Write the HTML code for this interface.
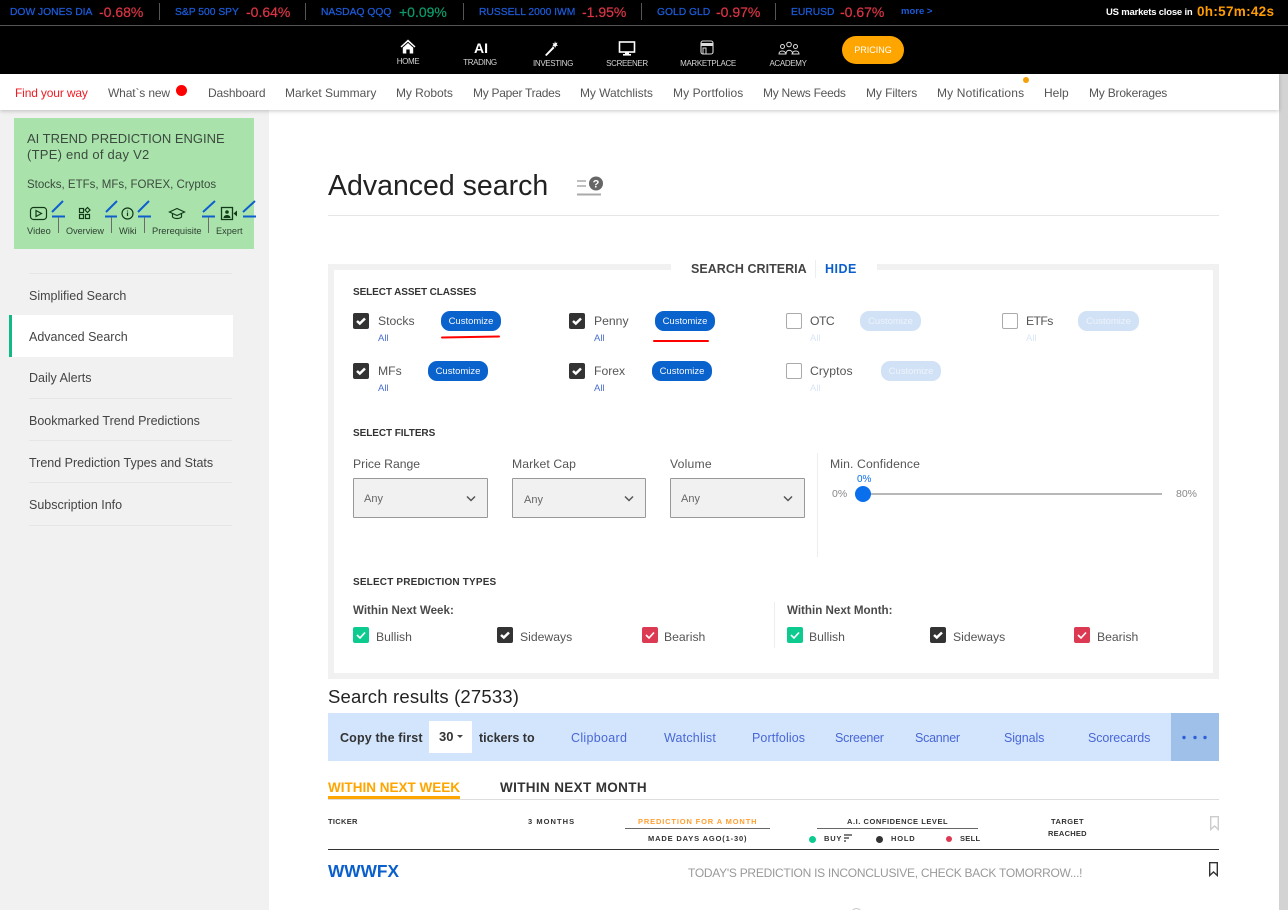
<!DOCTYPE html>
<html lang="en"><head><meta charset="utf-8"><title>Advanced search</title>
<style>
html,body{margin:0;padding:0;width:1288px;height:910px;overflow:hidden;background:#fff}
body{position:relative;font-family:"Liberation Sans",sans-serif;color:#333}
.a,.t{position:absolute}
.t{white-space:nowrap;line-height:16px;height:16px;margin-top:-8px}
.k{font-size:10.3px;color:#1c5bd8;-webkit-text-stroke:.25px #1c5bd8}
.r{font-size:14px;color:#dc3545;-webkit-text-stroke:.2px #dc3545}
.n{font-size:12px;color:#555}
.nl{font-size:8px;color:#d4d4d4;letter-spacing:-.35px;transform:translateX(-50%)}
.sm{font-size:12.5px;color:#444}
.sl{left:29px;width:203px;height:1px;background:#e6e6e6}
.h{font-size:10px;font-weight:700;color:#333}
.l{font-size:12.2px;color:#555}
.all{font-size:9.5px;color:#4a6fd0}
.dis{color:#dbe6f6}
.cb{position:absolute;width:16px;height:16px;border-radius:2px;background:#333}
.cb svg{position:absolute;left:0;top:0}
.un{background:#fff;border:1px solid #aaa;box-sizing:border-box}
.btn{position:absolute;height:20px;width:60px;border-radius:9px;background:#0a62cc;color:#f4f8ff;font-size:9.5px;line-height:22px;text-align:center}
.bd{background:#d2e2f6;color:#edf3fb}
.sel{position:absolute;top:478px;height:40px;box-sizing:border-box;border:1px solid #999;border-radius:1px;background:#f1f1f1}
.lk{font-size:12.5px;color:#4a67d6}
.th{font-size:7.5px;font-weight:700;letter-spacing:.8px;color:#333}
.sl2{position:absolute;height:1px;background:#666}
</style></head><body>

<!-- ticker -->
<div class="a" style="left:0;top:0;width:1288px;height:74px;background:#000"></div>
<div class="a" style="left:0;top:25px;width:1288px;height:1px;background:#555"></div>
<div class="a" style="left:159px;top:3px;width:1px;height:17px;background:#555"></div>
<div class="a" style="left:305px;top:3px;width:1px;height:17px;background:#555"></div>
<div class="a" style="left:463px;top:3px;width:1px;height:17px;background:#555"></div>
<div class="a" style="left:641px;top:3px;width:1px;height:17px;background:#555"></div>
<div class="a" style="left:775px;top:3px;width:1px;height:17px;background:#555"></div>

<div class="t k" style="left:10px;top:13px">DOW JONES DIA</div><div class="t r" style="left:99px;top:12px">-0.68%</div>
<div class="t k" style="left:175px;top:13px">S&amp;P 500 SPY</div><div class="t r" style="left:246px;top:12px">-0.64%</div>
<div class="t k" style="left:321px;top:13px">NASDAQ QQQ</div><div class="t r" style="left:399px;top:12px;color:#0b9b6c;-webkit-text-stroke:.2px #0b9b6c">+0.09%</div>
<div class="t k" style="left:479px;top:13px">RUSSELL 2000 IWM</div><div class="t r" style="left:582px;top:12px">-1.95%</div>
<div class="t k" style="left:657px;top:13px">GOLD GLD</div><div class="t r" style="left:716px;top:12px">-0.97%</div>
<div class="t k" style="left:791px;top:13px">EURUSD</div><div class="t r" style="left:840px;top:12px">-0.67%</div>
<div class="t" style="left:901px;top:12px;font-size:9.5px;font-weight:700;color:#1c5bd8">more &gt;</div>
<div class="t" style="left:1106px;top:13px;font-size:9.5px;font-weight:700;color:#fff;letter-spacing:-.2px">US markets close in</div>
<div class="t" style="left:1197px;top:12px;font-size:13.5px;font-weight:700;color:#ff9d00;letter-spacing:.3px">0h:57m:42s</div>

<!-- main nav -->
<svg class="a" style="left:400px;top:39px" width="16" height="15" viewBox="0 0 16 15"><path d="M8 .5 .5 7.500l1 1L8 2.700l6.500 5.800 1-1z" fill="#fff"/><path d="M2.800 8.600 8 4l5.200 4.600V14.500H9.700V10.500H6.300V14.500H2.800z" fill="#fff"/></svg>
<div class="t" style="left:474px;top:48px;font-size:14px;font-weight:700;color:#fff">AI</div>
<svg class="a" style="left:544px;top:41px" width="16" height="15" viewBox="0 0 16 15"><path d="M1 14 9 5.500l1.500 1.500L2.500 15z" fill="#fff"/><path d="M11 0l.6 2 2-.4-1 1.800 1.400 1.400-2 .1-.6 1.900-1.200-1.600-2 .2 1.200-1.600-.9-1.800 2 .6z" fill="#fff"/></svg>
<svg class="a" style="left:618px;top:41px" width="18" height="15" viewBox="0 0 18 15"><rect x="1.500" y="1" width="15" height="10" fill="none" stroke="#fff" stroke-width="1.600"/><rect x="7" y="11" width="4" height="2" fill="#fff"/><rect x="5" y="13" width="8" height="1.600" fill="#fff"/></svg>
<svg class="a" style="left:700px;top:40px" width="14" height="15" viewBox="0 0 14 15"><rect x="1" y="1" width="12" height="13" rx="2" fill="none" stroke="#ddd" stroke-width="1.100"/><rect x="1.500" y="3" width="11" height="3" fill="#ddd"/><rect x="3" y="8" width="3" height="6" fill="none" stroke="#ddd"/></svg>
<svg class="a" style="left:777px;top:41px" width="24" height="14" viewBox="0 0 22 14" fill="none" stroke="#ddd" stroke-width="1"><circle cx="11" cy="3.500" r="2.300"/><circle cx="4.500" cy="5.500" r="2"/><circle cx="17.500" cy="5.500" r="2"/><path d="M1 13c0-4 6-4 7 0H1zM8 13c0-5 6-5 7 0M14 13c1-4 7-4 7 0h-7z"/></svg>
<div class="t nl" style="left:408px;top:62px">HOME</div>
<div class="t nl" style="left:480px;top:63px">TRADING</div>
<div class="t nl" style="left:553px;top:64px">INVESTING</div>
<div class="t nl" style="left:627px;top:64px">SCREENER</div>
<div class="t nl" style="left:708px;top:64px">MARKETPLACE</div>
<div class="t nl" style="left:788px;top:64px">ACADEMY</div>
<div class="a" style="left:842px;top:36px;width:62px;height:28px;border-radius:14px;background:#ffa500;color:#fff;font-size:9px;line-height:28px;text-align:center">PRICING</div>

<!-- sidebar bg -->
<div class="a" style="left:0;top:110px;width:269px;height:800px;background:#f1f1f1"></div>
<div class="a" style="left:1279px;top:74px;width:9px;height:836px;background:#d3d3d3"></div>

<!-- sub nav -->
<div class="a" style="left:0;top:74px;width:1279px;height:36px;background:#fff;box-shadow:0 1px 4px rgba(0,0,0,.22)"></div>
<div class="t n" style="left:15px;top:93px;color:#f01c24;letter-spacing:-.15px">Find your way</div>
<div class="t n" style="left:108px;top:93px;letter-spacing:-.14px">What`s new</div>
<div class="a" style="left:176px;top:85px;width:11px;height:11px;border-radius:50%;background:#f00"></div>
<div class="t n" style="left:208px;top:93px;letter-spacing:-.15px">Dashboard</div>
<div class="t n" style="left:285px;top:93px">Market Summary</div>
<div class="t n" style="left:396px;top:93px;letter-spacing:-.06px">My Robots</div>
<div class="t n" style="left:473px;top:93px;letter-spacing:-.27px">My Paper Trades</div>
<div class="t n" style="left:580px;top:93px;letter-spacing:-.06px">My Watchlists</div>
<div class="t n" style="left:673px;top:93px;letter-spacing:.08px">My Portfolios</div>
<div class="t n" style="left:763px;top:93px;letter-spacing:-.26px">My News Feeds</div>
<div class="t n" style="left:866px;top:93px;letter-spacing:-.08px">My Filters</div>
<div class="t n" style="left:937px;top:93px;letter-spacing:.16px">My Notifications</div>
<div class="a" style="left:1023px;top:77px;width:6px;height:6px;border-radius:50%;background:#f5a00a"></div>
<div class="t n" style="left:1044px;top:93px">Help</div>
<div class="t n" style="left:1089px;top:93px;letter-spacing:-.2px">My Brokerages</div>

<!-- green card -->
<div class="a" style="left:14px;top:118px;width:240px;height:131px;background:#a9e3ab"></div>
<div class="t" style="left:27px;top:139px;font-size:13px;color:#3b4a3e">AI TREND PREDICTION ENGINE</div>
<div class="t" style="left:27px;top:155px;font-size:13px;letter-spacing:.25px;color:#3b4a3e">(TPE) end of day V2</div>
<div class="t" style="left:27px;top:185px;font-size:11.500px;color:#3b4a3e">Stocks, ETFs, MFs, FOREX, Cryptos</div>
<svg class="a" style="left:14px;top:198px" width="250" height="40" viewBox="14 198 250 40">
<g stroke="#0f5ed0" stroke-width="2" fill="none">
<path d="M52 212 63 201M52 216.500H65M106 212 117 201M105 216.500H117M138 212 149 201M138 216.500H151M203 212 215 201M202 216.500H215M243 212 255 201M243 216.500H256"/></g>
<g stroke="#6b6b6b" stroke-width="1"><path d="M58.500 217V233M111.500 217V233M144.500 217V233M208.500 217V233"/></g>
<g fill="none" stroke="#123a1a" stroke-width="1.200">
<rect x="30.500" y="207.500" width="16" height="12" rx="3"/><path d="M36 210.500 41.500 213.500 36 216.500z"/>
<rect x="79.500" y="208.500" width="4" height="4"/><rect x="79.500" y="214.500" width="4" height="4"/><rect x="85.500" y="214.500" width="4" height="4"/><path d="M87.500 207.500l2.500 2.500-2.500 2.500-2.500-2.500z"/>
<circle cx="127.500" cy="213.500" r="5.500"/><path d="M127.500 212.500v3.500M127.500 210.500v1"/>
<path d="M177 208.500 169.500 212 177 215.500 184.500 212zM172.500 213.500V217c2 2 7 2 9 0V213.500"/>
</g>
<rect x="221.500" y="207.500" width="11" height="12" fill="none" stroke="#123a1a" stroke-width="1.300"/>
<circle cx="227" cy="212" r="1.800" fill="#123a1a"/><path d="M223.500 218c0-4 7-4 7 0z" fill="#123a1a"/><path d="M233.500 213.500 237 210.500V216.500z" fill="#123a1a"/>
</svg>
<div class="t" style="left:27px;top:231px;font-size:9.300px;letter-spacing:.05px;color:#2f3f33">Video</div>
<div class="t" style="left:66px;top:231px;font-size:9.100px;color:#2f3f33">Overview</div>
<div class="t" style="left:119px;top:231px;font-size:9.300px;color:#2f3f33">Wiki</div>
<div class="t" style="left:152px;top:231px;font-size:9.300px;color:#2f3f33">Prerequisite</div>
<div class="t" style="left:216px;top:231px;font-size:9.200px;color:#2f3f33">Expert</div>

<!-- side menu -->
<div class="a sl" style="top:273px"></div>
<div class="a sl" style="top:398px"></div>
<div class="a sl" style="top:440px"></div>
<div class="a sl" style="top:482px"></div>
<div class="a sl" style="top:525px"></div>
<div class="a" style="left:9px;top:315px;width:224px;height:42px;background:#fff"></div>
<div class="a" style="left:9px;top:315px;width:3px;height:42px;background:#12b886"></div>
<div class="t sm" style="left:29px;top:296px">Simplified Search</div>
<div class="t sm" style="left:29px;top:337px">Advanced Search</div>
<div class="t sm" style="left:29px;top:378px">Daily Alerts</div>
<div class="t sm" style="left:29px;top:421px">Bookmarked Trend Predictions</div>
<div class="t sm" style="left:29px;top:463px">Trend Prediction Types and Stats</div>
<div class="t sm" style="left:29px;top:505px">Subscription Info</div>

<!-- title -->
<div class="t" style="left:328px;top:186px;font-size:28.500px;line-height:36px;height:36px;margin-top:-18px;color:#222">Advanced search</div>
<svg class="a" style="left:577px;top:176px" width="26" height="21" viewBox="0 0 26 21"><circle cx="19" cy="7.500" r="7" fill="#666"/><text x="19" y="11.500" font-family="Liberation Sans" font-size="11" font-weight="700" fill="#fff" text-anchor="middle">?</text><path d="M0 5h9M0 10h9" stroke="#aaa" stroke-width="1.600"/><path d="M0 18.500h24" stroke="#aaa" stroke-width="2"/></svg>
<div class="a" style="left:328px;top:215px;width:891px;height:1px;background:#e5e5e5"></div>

<!-- panel -->
<div class="a" style="left:328px;top:264px;width:879px;height:403px;border:6px solid #f1f1f1"></div>
<div class="a" style="left:671px;top:262px;width:206px;height:8px;background:#fff"></div>
<div class="t" style="left:691px;top:269px;font-size:12.500px;font-weight:700;letter-spacing:.03px;color:#444">SEARCH CRITERIA</div>
<div class="a" style="left:815px;top:260px;width:1px;height:18px;background:#eee"></div>
<div class="t" style="left:825px;top:269px;font-size:12.500px;font-weight:700;letter-spacing:.5px;color:#0a5fcc">HIDE</div>

<div class="t h" style="left:353px;top:293px;letter-spacing:-.1px">SELECT ASSET CLASSES</div>

<div class="cb" style="left:353px;top:313px"><svg width="16" height="16"><path d="M4 8 6.800 10.500 12 5.500" fill="none" stroke="#fff" stroke-width="2.500"/></svg></div>
<div class="t l" style="left:378px;top:321px">Stocks</div><div class="t all" style="left:378px;top:339px">All</div>
<div class="btn" style="left:441px;top:311px">Customize</div>
<div class="a" style="left:441px;top:336px;width:59px;height:2px;background:#f00;border-radius:1px;transform:rotate(-1deg)"></div>

<div class="cb" style="left:569px;top:313px"><svg width="16" height="16"><path d="M4 8 6.800 10.500 12 5.500" fill="none" stroke="#fff" stroke-width="2.500"/></svg></div>
<div class="t l" style="left:594px;top:321px">Penny</div><div class="t all" style="left:594px;top:339px">All</div>
<div class="btn" style="left:655px;top:311px">Customize</div>
<div class="a" style="left:653px;top:340px;width:56px;height:2px;background:#f00;border-radius:1px"></div>

<div class="cb un" style="left:786px;top:313px"></div>
<div class="t l" style="left:810px;top:321px;letter-spacing:-.5px">OTC</div><div class="t all dis" style="left:810px;top:339px">All</div>
<div class="btn bd" style="left:860px;top:311px;width:61px">Customize</div>

<div class="cb un" style="left:1002px;top:313px"></div>
<div class="t l" style="left:1026px;top:321px;letter-spacing:-.6px">ETFs</div><div class="t all dis" style="left:1026px;top:339px">All</div>
<div class="btn bd" style="left:1078px;top:311px;width:61px">Customize</div>

<div class="cb" style="left:353px;top:363px"><svg width="16" height="16"><path d="M4 8 6.800 10.500 12 5.500" fill="none" stroke="#fff" stroke-width="2.500"/></svg></div>
<div class="t l" style="left:378px;top:371px">MFs</div><div class="t all" style="left:378px;top:389px">All</div>
<div class="btn" style="left:428px;top:361px">Customize</div>

<div class="cb" style="left:569px;top:363px"><svg width="16" height="16"><path d="M4 8 6.800 10.500 12 5.500" fill="none" stroke="#fff" stroke-width="2.500"/></svg></div>
<div class="t l" style="left:594px;top:371px">Forex</div><div class="t all" style="left:594px;top:389px">All</div>
<div class="btn" style="left:652px;top:361px">Customize</div>

<div class="cb un" style="left:786px;top:363px"></div>
<div class="t l" style="left:810px;top:371px;letter-spacing:.1px">Cryptos</div><div class="t all dis" style="left:810px;top:389px">All</div>
<div class="btn bd" style="left:881px;top:361px">Customize</div>

<!-- filters -->
<div class="t h" style="left:353px;top:434px;letter-spacing:-.07px">SELECT FILTERS</div>
<div class="t l" style="left:353px;top:464px">Price Range</div>
<div class="t l" style="left:512px;top:464px;letter-spacing:.1px">Market Cap</div>
<div class="t l" style="left:670px;top:464px;letter-spacing:.2px">Volume</div>
<div class="sel" style="left:353px;width:135px"></div>
<div class="sel" style="left:512px;width:134px"></div>
<div class="sel" style="left:670px;width:135px"></div>
<div class="t" style="left:364px;top:499px;font-size:11px;color:#666">Any</div>
<div class="t" style="left:524px;top:500px;font-size:11px;color:#666">Any</div>
<div class="t" style="left:681px;top:499px;font-size:11px;color:#666">Any</div>
<svg class="a" style="left:466px;top:495px" width="10" height="7"><path d="M1 1.500 5 5.500 9 1.500" fill="none" stroke="#555" stroke-width="1.500"/></svg>
<svg class="a" style="left:624px;top:495px" width="10" height="7"><path d="M1 1.500 5 5.500 9 1.500" fill="none" stroke="#555" stroke-width="1.500"/></svg>
<svg class="a" style="left:783px;top:495px" width="10" height="7"><path d="M1 1.500 5 5.500 9 1.500" fill="none" stroke="#555" stroke-width="1.500"/></svg>
<div class="a" style="left:817px;top:453px;width:1px;height:104px;background:#eee"></div>
<div class="t l" style="left:830px;top:464px;letter-spacing:.13px">Min. Confidence</div>
<div class="t" style="left:832px;top:494px;font-size:10.500px;color:#888">0%</div>
<div class="t" style="left:857px;top:480px;font-size:10px;color:#0a6fec">0%</div>
<div class="t" style="left:1176px;top:494px;font-size:10.500px;color:#888">80%</div>
<div class="a" style="left:864px;top:493px;width:298px;height:2px;background:#b8b8b8"></div>
<div class="a" style="left:855px;top:486px;width:16px;height:16px;border-radius:50%;background:#0a6fec"></div>

<!-- prediction types -->
<div class="t h" style="left:353px;top:583px;letter-spacing:.17px">SELECT PREDICTION TYPES</div>
<div class="t" style="left:353px;top:611px;font-size:11.600px;font-weight:700;color:#4a4a4a">Within Next Week:</div>
<div class="t" style="left:787px;top:611px;font-size:11.600px;font-weight:700;color:#4a4a4a">Within Next Month:</div>
<div class="a" style="left:774px;top:602px;width:1px;height:46px;background:#eee"></div>

<div class="cb" style="left:353px;top:627px;background:#0dcb8f"><svg width="16" height="16"><path d="M4 8 7 11 12 5.500" fill="none" stroke="#fff" stroke-width="1.600"/></svg></div>
<div class="t l" style="left:376px;top:637px">Bullish</div>
<div class="cb" style="left:497px;top:627px"><svg width="16" height="16"><path d="M4 8 6.800 10.500 12 5.500" fill="none" stroke="#fff" stroke-width="2.500"/></svg></div>
<div class="t l" style="left:520px;top:637px">Sideways</div>
<div class="cb" style="left:642px;top:627px;background:#dc3a52"><svg width="16" height="16"><path d="M4 8 7 11 12 5.500" fill="none" stroke="#fff" stroke-width="1.600"/></svg></div>
<div class="t l" style="left:664px;top:637px">Bearish</div>

<div class="cb" style="left:787px;top:627px;background:#0dcb8f"><svg width="16" height="16"><path d="M4 8 7 11 12 5.500" fill="none" stroke="#fff" stroke-width="1.600"/></svg></div>
<div class="t l" style="left:809px;top:637px">Bullish</div>
<div class="cb" style="left:930px;top:627px"><svg width="16" height="16"><path d="M4 8 6.800 10.500 12 5.500" fill="none" stroke="#fff" stroke-width="2.500"/></svg></div>
<div class="t l" style="left:953px;top:637px">Sideways</div>
<div class="cb" style="left:1074px;top:627px;background:#dc3a52"><svg width="16" height="16"><path d="M4 8 7 11 12 5.500" fill="none" stroke="#fff" stroke-width="1.600"/></svg></div>
<div class="t l" style="left:1097px;top:637px">Bearish</div>

<!-- results -->
<div class="t" style="left:328px;top:697px;font-size:18.500px;letter-spacing:.18px;line-height:24px;height:24px;margin-top:-12px;color:#222">Search results (27533)</div>
<div class="a" style="left:328px;top:713px;width:891px;height:48px;background:#d2e5fd"></div>
<div class="a" style="left:1171px;top:713px;width:48px;height:48px;background:#9fc1e9"></div>
<div class="a" style="left:429px;top:721px;width:43px;height:32px;background:#fff"></div>
<div class="t" style="left:340px;top:738px;font-size:12.500px;font-weight:700;letter-spacing:.15px;color:#333">Copy the first</div>
<div class="t" style="left:439px;top:737px;font-size:13px;font-weight:700;color:#333">30</div>
<div class="a" style="left:457px;top:735px;width:0;height:0;border-left:3px solid transparent;border-right:3px solid transparent;border-top:3px solid #444"></div>
<div class="t" style="left:479px;top:738px;font-size:12.500px;font-weight:700;color:#333">tickers to</div>
<div class="t lk" style="left:571px;top:738px;letter-spacing:.3px">Clipboard</div>
<div class="t lk" style="left:664px;top:738px;letter-spacing:.2px">Watchlist</div>
<div class="t lk" style="left:752px;top:738px;letter-spacing:.1px">Portfolios</div>
<div class="t lk" style="left:835px;top:738px;letter-spacing:-.25px">Screener</div>
<div class="t lk" style="left:915px;top:738px;letter-spacing:-.25px">Scanner</div>
<div class="t lk" style="left:1004px;top:738px;letter-spacing:-.1px">Signals</div>
<div class="t lk" style="left:1088px;top:738px;letter-spacing:-.1px">Scorecards</div>
<svg class="a" style="left:1182px;top:735px" width="26" height="5"><circle cx="2" cy="2.500" r="1.700" fill="#2f5fd8"/><circle cx="13" cy="2.500" r="1.700" fill="#2f5fd8"/><circle cx="23" cy="2.500" r="1.700" fill="#2f5fd8"/></svg>

<div class="t" style="left:328px;top:788px;font-size:13.500px;font-weight:700;color:#ffa500">WITHIN NEXT WEEK</div>
<div class="t" style="left:500px;top:788px;font-size:13.500px;font-weight:700;letter-spacing:.35px;color:#333">WITHIN NEXT MONTH</div>
<div class="a" style="left:328px;top:799px;width:891px;height:1px;background:#ddd"></div>
<div class="a" style="left:328px;top:796px;width:132px;height:3px;background:#ffa500"></div>

<div class="t th" style="left:328px;top:822px;letter-spacing:.3px">TICKER</div>
<div class="t th" style="left:528px;top:822px;letter-spacing:1.050px">3 MONTHS</div>
<div class="t th" style="left:638px;top:822px;color:#ffa033;letter-spacing:.85px">PREDICTION FOR A MONTH</div>
<div class="sl2" style="left:625px;top:828px;width:145px"></div>
<div class="t th" style="left:648px;top:839px;letter-spacing:.85px">MADE DAYS AGO(1-30)</div>
<div class="t th" style="left:847px;top:822px;letter-spacing:.55px">A.I. CONFIDENCE LEVEL</div>
<div class="sl2" style="left:817px;top:828px;width:161px"></div>
<div class="a" style="left:809px;top:836px;width:7px;height:7px;border-radius:50%;background:#0dcb8f"></div>
<div class="t th" style="left:824px;top:839px">BUY</div>
<svg class="a" style="left:844px;top:834px" width="9" height="9"><path d="M0 1h8M0 4h5M0 7h2" stroke="#333" stroke-width="1.200"/></svg>
<div class="a" style="left:876px;top:836px;width:7px;height:7px;border-radius:50%;background:#333"></div>
<div class="t th" style="left:891px;top:839px">HOLD</div>
<div class="a" style="left:946px;top:836px;width:6px;height:6px;border-radius:50%;background:#dc3a52"></div>
<div class="t th" style="left:960px;top:839px;letter-spacing:.3px">SELL</div>
<div class="t th" style="left:1051px;top:822px;letter-spacing:.45px">TARGET</div>
<div class="t th" style="left:1048px;top:834px;letter-spacing:.25px">REACHED</div>
<svg class="a" style="left:1210px;top:816px" width="9" height="15"><path d="M.7.700H8.300V13.500L4.500 10 .7 13.500z" fill="none" stroke="#ccc" stroke-width="1.400"/></svg>
<div class="a" style="left:328px;top:849px;width:891px;height:1px;background:#333"></div>
<div class="t" style="left:328px;top:871px;font-size:17.300px;font-weight:700;color:#0a5fcc">WWWFX</div>
<div class="t" style="left:688px;top:873px;font-size:12px;letter-spacing:-.27px;color:#999">TODAY'S PREDICTION IS INCONCLUSIVE, CHECK BACK TOMORROW...!</div>
<svg class="a" style="left:1209px;top:862px" width="9" height="15"><path d="M.7.700H8.300V13.500L4.500 10 .7 13.500z" fill="none" stroke="#333" stroke-width="1.400"/></svg>
<div class="a" style="left:851px;top:908px;width:11px;height:11px;border-radius:50%;border:1px solid #ccc;box-sizing:border-box"></div>
</body></html>
